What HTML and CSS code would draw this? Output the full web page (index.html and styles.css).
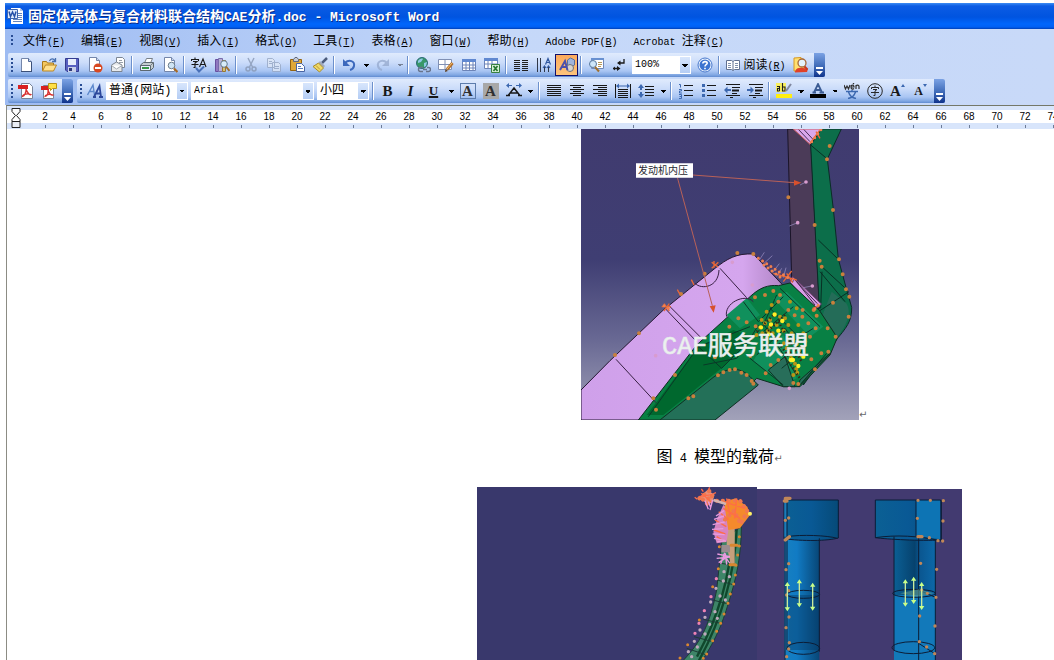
FILE: index.html
```html
<!DOCTYPE html>
<html lang="zh-CN">
<head>
<meta charset="utf-8">
<title>固定体壳体与复合材料联合结构CAE分析.doc - Microsoft Word</title>
<link rel="stylesheet" href="styles.css">
</head>
<body>
<div class="window">
  <header class="title-bar">
    <svg class="app-icon" viewBox="0 0 16 16"><path fill="#fff" d="M4 0h9l3 3v13H4z"/><path fill="#b8c8e4" d="M13 0v3h3z"/><path stroke="#6484bc" d="M10 5.500h5M11 7.500h4M11 9.500h4M6 11.500h9M6 13.500h9"/><path fill="#dfe9fa" stroke="#3c64b0" d="M.5 1.500h10v9H.5z"/><path fill="none" stroke="#2450a8" stroke-width="1.500" d="M2 3.500l1.500 5 2-4.500 2 4.500L9 3.500"/></svg>
    <h1 class="title"><span class="cjk">固定体壳体与复合材料联合结构</span>CAE<span class="cjk">分析</span>.doc - Microsoft Word</h1>
  </header>

  <div class="chrome">
    <nav class="menu-bar">
      <i class="grip"></i>
      <button class="menu"><span class="cjk">文件</span>(<u>F</u>)</button>
      <button class="menu"><span class="cjk">编辑</span>(<u>E</u>)</button>
      <button class="menu"><span class="cjk">视图</span>(<u>V</u>)</button>
      <button class="menu"><span class="cjk">插入</span>(<u>I</u>)</button>
      <button class="menu"><span class="cjk">格式</span>(<u>O</u>)</button>
      <button class="menu"><span class="cjk">工具</span>(<u>T</u>)</button>
      <button class="menu"><span class="cjk">表格</span>(<u>A</u>)</button>
      <button class="menu"><span class="cjk">窗口</span>(<u>W</u>)</button>
      <button class="menu"><span class="cjk">帮助</span>(<u>H</u>)</button>
      <button class="menu">Adobe PDF(<u>B</u>)</button>
      <button class="menu">Acrobat <span class="cjk">注释</span>(<u>C</u>)</button>
    </nav>

    <div class="bar-row">
      <div class="toolbar">
        <i class="grip"></i>
        <button class="tool" aria-label="新建"><svg viewBox="0 0 16 16"><path fill="#fff" stroke="#7486aa" d="M3.500 1.500h7l3 3v10h-10z"/><path fill="#c8d6ee" stroke="#506898" d="M10.500 1.500v3h3"/><path stroke="#3c5078" d="M13.500 5v10M3 14.500h11"/></svg></button>
        <button class="tool" aria-label="打开"><svg viewBox="0 0 16 16"><path fill="#f4c860" stroke="#a87818" d="M1.500 13.500v-9h4l1 1.500h6v3"/><path fill="#ffe08c" stroke="#b88420" d="M1.500 14l3-6h11l-3 6z"/><path fill="none" stroke="#4870b0" stroke-width="1.300" d="M8.500 4c1-2.500 4-3 5.500 0M14.500 1v3.500H11"/></svg></button>
        <button class="tool" aria-label="保存"><svg viewBox="0 0 16 16"><path fill="#5860c0" stroke="#343c90" d="M1.500 1.500h13v13H3l-1.500-1.500z"/><path fill="#e8eefc" d="M4 2h8v6H4z"/><path fill="#c8d0e8" d="M4 10h8v5H4z"/><path fill="#303878" d="M5 11h3v3H5z"/></svg></button>
        <button class="tool" aria-label="权限"><svg viewBox="0 0 16 16"><path fill="#fff" stroke="#7486aa" d="M2.500.500h7l3 3v11h-10z"/><path fill="#c8d6ee" stroke="#7486aa" d="M9.500.500v3h3"/><circle cx="11" cy="11" r="4.500" fill="#d84820"/><path fill="#fff" d="M8 10h6v2H8z"/></svg></button>
        <button class="tool" aria-label="电子邮件"><svg viewBox="0 0 16 16"><path fill="#fff" stroke="#7c8694" d="M6.500.500h6l2 2v8h-8z"/><path fill="#e8eaec" stroke="#7c8490" d="M1.500 8l5-3 5.500 3v6.500H1.500z"/><path fill="#fff" stroke="#a4acb4" d="M1.500 8.500l5 3.500L12 8.500"/><path stroke="#98a0aa" d="M9 3.500h3M9 5.500h4"/></svg></button>
        <i class="sep"></i>
        <button class="tool" aria-label="打印"><svg viewBox="0 0 16 16"><path fill="#fff" stroke="#788088" d="M5.500 6l2-4.500h6l-2 4.500z"/><path fill="#c4ccd0" stroke="#5c6870" d="M1.500 8l3-2.500h10v5l-3 3h-10z"/><path fill="#eef" stroke="#5c6870" d="M1.500 8.500h10v5h-10z"/><path stroke="#389848" stroke-width="2" d="M3 11h7"/><path stroke="#788088" d="M11.500 8.500l3-3"/></svg></button>
        <button class="tool" aria-label="打印预览"><svg viewBox="0 0 16 16"><path fill="#fff" stroke="#7486aa" d="M2.500.500h7l3 3v11h-10z"/><path fill="#c8d6ee" stroke="#7486aa" d="M9.500.500v3h3"/><circle cx="9.500" cy="8.500" r="3.300" fill="#cfe4f4" stroke="#6c7c8c"/><path stroke="#a86820" stroke-width="2.200" d="M12 11.500l3.500 3.500"/></svg></button>
        <i class="sep"></i>
        <button class="tool" aria-label="拼写和语法"><svg viewBox="0 0 16 16"><path fill="none" stroke="#181818" stroke-width="1.100" d="M4 .500v1.500M.5 4V2.500h7V4M2 4.500h4L4 6v4.500H2.500M.5 7.500h7M8.500 10L12 2l3 8M10 7.500h4"/><path fill="none" stroke="#4870b8" stroke-width="2" d="M5 11l3 3.500L13 9.500"/></svg></button>
        <button class="tool" aria-label="信息检索"><svg viewBox="0 0 16 16"><path fill="#9078c0" stroke="#6850a0" d="M1.500 2.500h3v12h-3z"/><path fill="#b8b0d4" stroke="#786cac" d="M4.500 1.500h4v13h-4z"/><path fill="#d8c078" stroke="#987830" d="M8.500 3.500h3v11h-3z"/><circle cx="10" cy="7" r="3.300" fill="#d8ecf8" stroke="#607890"/><path stroke="#a07030" stroke-width="2" d="M12 9.500l3.500 4.500"/></svg></button>
        <i class="sep"></i>
        <button class="tool" aria-label="剪切" disabled><svg viewBox="0 0 16 16"><path fill="none" stroke="#8898b4" stroke-width="1.400" d="M5 1l4.500 9M11 1L6.500 10"/><circle cx="5" cy="12" r="2" fill="none" stroke="#8898b4" stroke-width="1.500"/><circle cx="11" cy="12" r="2" fill="none" stroke="#8898b4" stroke-width="1.500"/></svg></button>
        <button class="tool" aria-label="复制" disabled><svg viewBox="0 0 16 16"><path fill="#dce6f6" stroke="#98a8c4" d="M1.500 1.500h5l2 2v7h-7zM6.500 5.500h6l2 2v7h-8z"/><path stroke="#98a8c4" d="M3 4.500h3M3 6.500h3M8 9.500h5M8 11.500h5"/></svg></button>
        <button class="tool" aria-label="粘贴"><svg viewBox="0 0 16 16"><path fill="#e0a838" stroke="#946410" d="M1.500 2.500h11v11h-11z"/><path fill="#c8ccd4" stroke="#60687c" d="M4.500 4.500v-2L6 .500h2l1.500 2v2z"/><path fill="#fff" stroke="#4864a4" d="M7.500 6.500h5l3 3v5h-8z"/><path stroke="#5c7cb8" d="M9 9.500h3M9 11.500h5"/></svg></button>
        <button class="tool" aria-label="格式刷"><svg viewBox="0 0 16 16"><path stroke="#4c5c7c" stroke-width="2.500" d="M15 1l-5 5"/><path fill="#a0a8b8" d="M8 4l5 5-1.500 1.500L6.500 6z"/><path fill="#f0d868" stroke="#a88c28" d="M6.500 6l5 5-4 4L1 9.500z"/><path stroke="#b89830" d="M4 8.500l4 4"/></svg></button>
        <i class="sep"></i>
        <button class="tool" aria-label="撤消"><svg viewBox="0 0 16 16"><path fill="none" stroke="#3c68bc" stroke-width="2" d="M4 6c4-4 10-2 9 3-.4 2-2 3.500-4 4"/><path fill="#3c68bc" d="M2 2v7h7z"/></svg></button>
        <button class="drop" aria-label="撤消列表"></button>
        <button class="tool" aria-label="恢复" disabled><svg viewBox="0 0 16 16"><path fill="none" stroke="#98acd0" stroke-width="2" d="M12 6C8 2 2 4 3 9c.4 2 2 3.500 4 4"/><path fill="#98acd0" d="M14 2v7H7z"/></svg></button>
        <button class="drop" aria-label="恢复列表" disabled></button>
        <i class="sep"></i>
        <button class="tool" aria-label="超链接"><svg viewBox="0 0 16 16"><circle cx="7" cy="6" r="5.500" fill="#389868" stroke="#2c6c78"/><path fill="#90c8e8" d="M3 4c1-2 4-3 5-2L6 5 3 6zM9 6l3-1-1 4-2 1z"/><path fill="none" stroke="#68748c" stroke-width="1.400" d="M8 10.500H5.500a2 2 0 000 4H8M12 10.500h1.500a2 2 0 010 4H11M8 12.500h4"/></svg></button>
        <button class="tool" aria-label="表格和边框"><svg viewBox="0 0 16 16"><path fill="#fff" stroke="#8090b4" d="M.5 2.500h13v10H.5zM7 2.500v10M.5 7.500h13"/><path stroke="#b06c28" stroke-width="3" d="M14.500 6L9 12.500"/><path stroke="#f4c070" d="M14 6l-5 6"/><path fill="#604020" d="M7 15l.5-3L10 14z"/></svg></button>
        <button class="tool" aria-label="插入表格"><svg viewBox="0 0 16 16"><path fill="#fff" stroke="#6c84b8" d="M1.500 2.500h13v11h-13zM5 3v11M8.500 3v11M12 3v11M2 8h12M2 11h12"/><path fill="#6088d0" d="M1 2h14v3H1z"/></svg></button>
        <button class="tool" aria-label="插入 Excel 工作表"><svg viewBox="0 0 16 16"><path fill="#fff" stroke="#6c84b8" d="M.5 1.500h13v10H.5zM4 2v10M8 2v10M1 7h13"/><path fill="#6088d0" d="M0 1h14v3H0z"/><path fill="#d8f0d8" stroke="#388040" d="M7.500 7.500h8v8h-8z"/><path stroke="#287830" stroke-width="1.700" d="M9.500 9l4 5M13.500 9l-4 5"/></svg></button>
        <i class="sep"></i>
        <button class="tool" aria-label="分栏"><svg viewBox="0 0 16 16"><path stroke="#202020" d="M1 3.500h6M1 5.500h6M1 7.500h6M1 9.500h6M1 11.500h6M1 13.500h6M9 3.500h6M9 5.500h6M9 7.500h6M9 9.500h6M9 11.500h6M9 13.500h6"/></svg></button>
        <button class="tool" aria-label="更改文字方向"><svg viewBox="0 0 16 16"><path fill="none" stroke="#303848" d="M1.500 1v14M4.500 1v14M8.500 9v6M12.500 9v6"/><path fill="none" stroke="#3058a0" stroke-width="1.200" d="M9.500 7.500l2.500-6 2.500 6M10.500 5.500h3M7 11l1.500-2 1.500 2M11 11l1.500-2 1.500 2"/></svg></button>
        <button class="tool pressed" aria-label="绘图" aria-pressed="true"><svg viewBox="0 0 16 16"><path fill="#a0b4dc" stroke="#5870a0" d="M8.500 3l3-2 4 2v5l-3 2-4-2z"/><ellipse cx="11" cy="11" rx="3.500" ry="3.500" fill="#d8d4cc" stroke="#70707c"/><path fill="none" stroke="#4c50ac" stroke-width="2" d="M1 13L6 4l2.500 9M3 10h5"/></svg></button>
        <i class="sep"></i>
        <button class="tool" aria-label="文档结构图"><svg viewBox="0 0 16 16"><path fill="#fff" stroke="#7088b8" d="M3.500 1.500h12v10h-12z"/><path fill="#6890d0" d="M3 1h13v2H3z"/><path stroke="#b89858" d="M10 5.500h4M10 7.500h4M10 9.500h3"/><circle cx="5" cy="7" r="3.500" fill="#cfe6f8" stroke="#58789c"/><path stroke="#a07030" stroke-width="2" d="M7 10l4 4.500"/></svg></button>
        <button class="tool" aria-label="显示/隐藏编辑标记"><svg viewBox="0 0 16 16"><path fill="none" stroke="#181818" stroke-width="1.300" d="M13 2v4H8M2 11.500h4"/><path fill="#181818" d="M6 6l3.500-2.500v5zM9.500 11.500L6 9v5zM4 9.500l-2 2 2 2z"/></svg></button>
        <select class="combo combo-zoom" aria-label="显示比例"><option>100%</option></select>
        <button class="tool" aria-label="帮助"><svg viewBox="0 0 16 16"><circle cx="8" cy="8" r="7" fill="#eef5ff" stroke="#4878cc"/><circle cx="8" cy="8" r="5.500" fill="#3c74d0"/><path fill="none" stroke="#fff" stroke-width="1.600" d="M5.800 6.500C6 4 10.300 4 10.200 6.300 10.100 7.800 8 7.700 8 9.500M8 10.700v1.500"/></svg></button>
        <i class="sep"></i>
        <button class="tool tool-text"><svg viewBox="0 0 16 16"><path fill="#fff" stroke="#607090" d="M1.500 3.500h5l1.500 1 1.500-1h5v9h-5l-1.500 1-1.500-1h-5zM8 4.500v9"/><path stroke="#8090ac" d="M3 6.500h3M3 8.500h3M3 10.500h3M10 6.500h3M10 8.500h3M10 10.500h3"/></svg><span><span class="cjk">阅读</span>(<u>R</u>)</span></button>
        <button class="tool" aria-label="查找资料"><svg viewBox="0 0 16 16"><path fill="#ffe070" stroke="#d89820" d="M1 1l7-.5 3 3V14H1z"/><path fill="#e04028" d="M2 14.500c1-4 5-4 8-3.500l5 1-1 3-12 .5z"/><circle cx="9" cy="6" r="4" fill="#e4f4fc" stroke="#a86838" stroke-width="1.300"/><path stroke="#c83820" stroke-width="2" d="M11.500 9.500l3 3"/></svg></button>
        <button class="cap" aria-label="工具栏选项"><svg viewBox="0 0 7 8"><path fill="#fff" d="M0 0h7v2H0zM0 4h7L3.500 8z"/></svg></button>
      </div>
    </div>

    <div class="bar-row">
      <div class="toolbar">
        <i class="grip"></i>
        <button class="tool" aria-label="转换为 Adobe PDF"><svg viewBox="0 0 16 16"><path fill="#fff" stroke="#788498" d="M3.500.500h8l3 3v12h-11z"/><path fill="#d82020" d="M0 2h10v4H0z"/><path fill="none" stroke="#d83030" stroke-width="1.300" d="M8 6c.5 4-2 7-3.500 7.500C4 12 8 10 13 11.500 12 13 9 9 8 6"/></svg></button>
        <button class="tool" aria-label="转换并添加注释"><svg viewBox="0 0 16 16"><path fill="#fff" stroke="#788498" d="M2.500 2.500h10v13h-10z"/><path fill="#d82020" d="M0 3h8v4H0z"/><path fill="none" stroke="#d83030" stroke-width="1.300" d="M7 7c.5 4-1.500 6-3 6.500C4 12 8 10.500 12 12 10 13 8 10 7 7"/><path fill="#ffe048" stroke="#b89418" d="M7.500.500h8v5h-4l-2 2v-2h-2z"/></svg></button>
        <button class="cap" aria-label="工具栏选项"><svg viewBox="0 0 7 8"><path fill="#fff" d="M0 0h7v2H0zM0 4h7L3.500 8z"/></svg></button>
      </div>
      <div class="toolbar">
        <i class="grip"></i>
        <button class="tool" aria-label="格式窗格"><svg viewBox="0 0 16 16"><path fill="none" stroke="#5c88cc" stroke-width="1.400" d="M.5 12L6 2l1.500 10M3 8.500h4"/><path fill="none" stroke="#2c489c" stroke-width="1.800" d="M7 14l5.500-11L14 14M9 10.500h5M6 14h3M12 14h4"/></svg></button>
        <select class="combo combo-style" aria-label="样式"><option>普通(网站)</option></select>
        <select class="combo combo-font" aria-label="字体"><option>Arial</option></select>
        <select class="combo combo-size" aria-label="字号"><option>小四</option></select>
        <i class="sep"></i>
        <button class="tool glyph" aria-label="加粗">B</button>
        <button class="tool glyph italic" aria-label="倾斜">I</button>
        <button class="tool glyph under" aria-label="下划线">U</button>
        <button class="drop" aria-label="下划线样式"></button>
        <button class="tool glyph" aria-label="字符边框"><span class="boxed">A</span></button>
        <button class="tool glyph" aria-label="字符底纹"><span class="shaded">A</span></button>
        <button class="tool" aria-label="字符缩放"><svg viewBox="0 0 16 16"><path fill="none" stroke="#181818" stroke-width="1.500" d="M2.500 12L8 5l5.500 7M4.500 10h7M0 12.500h4M12 12.500h4"/><path fill="#3c68b0" d="M0 2.500L3 0v2h3v1H3v2zM16 2.500L13 0v2h-3v1h3v2z"/></svg></button>
        <button class="drop" aria-label="缩放比例"></button>
        <i class="sep"></i>
        <button class="tool" aria-label="两端对齐"><svg viewBox="0 0 16 16"><path stroke="#181818" d="M1 2.500h14M1 4.500h14M1 6.500h14M1 8.500h14M1 10.500h14M1 12.500h14"/></svg></button>
        <button class="tool" aria-label="居中"><svg viewBox="0 0 16 16"><path stroke="#181818" d="M1 2.500h14M4 4.500h8M1 6.500h14M4 8.500h8M1 10.500h14M4 12.500h8"/></svg></button>
        <button class="tool" aria-label="右对齐"><svg viewBox="0 0 16 16"><path stroke="#181818" d="M1 2.500h14M6 4.500h9M1 6.500h14M6 8.500h9M1 10.500h14M6 12.500h9"/></svg></button>
        <button class="tool" aria-label="分散对齐"><svg viewBox="0 0 16 16"><path stroke="#181818" d="M.5 1v14M15.500 1v14M3 6.500h10M3 8.500h10M3 10.500h10M3 12.500h10M3 14.500h10"/><path fill="#3c68b0" d="M1 3l3-2.500V2.500h8V.500L15 3l-3 2.500v-2H4v2z"/></svg></button>
        <button class="tool" aria-label="行距"><svg viewBox="0 0 16 16"><path stroke="#181818" stroke-width="1.200" d="M7 3.500h9M7 6.500h9M7 9.500h9M7 12.500h9"/><path fill="#3c68b0" d="M0 5l3-4 3 4H4v2H2V5zM0 11l3 4 3-4H4V9H2v2z"/></svg></button>
        <button class="drop" aria-label="行距列表"></button>
        <i class="sep"></i>
        <button class="tool" aria-label="编号"><svg viewBox="0 0 16 16"><path stroke="#181818" d="M6 2.500h9M6 7.500h9M6 12.500h9"/><path fill="none" stroke="#3c68b0" d="M1 1.500h1.500v3M1 6.500h2.500v1.500H1.500v2H4M1 11.500h2.500v4H1M1.500 13.500h2"/></svg></button>
        <button class="tool" aria-label="项目符号"><svg viewBox="0 0 16 16"><path stroke="#181818" d="M6 2.500h9M6 7.500h9M6 12.500h9"/><path fill="#3c68b0" d="M1 1h3v3H1zM1 6h3v3H1zM1 11h3v3H1z"/></svg></button>
        <button class="tool" aria-label="减少缩进量"><svg viewBox="0 0 16 16"><path stroke="#181818" d="M2 1.500h14M8 4.500h8M8 10.500h5M2 12.500h14M6 14.500h3"/><path stroke="#181818" stroke-width="2" d="M8 7.500h7"/><path fill="#3c68b0" d="M0 7l3.500-3.500v2.500H7v2H3.500v2.500z"/></svg></button>
        <button class="tool" aria-label="增加缩进量"><svg viewBox="0 0 16 16"><path stroke="#181818" d="M2 1.500h14M8 4.500h8M8 10.500h5M2 12.500h14M6 14.500h3"/><path stroke="#181818" stroke-width="2" d="M8 7.500h7"/><path fill="#3c68b0" d="M7 7L3.500 3.500v2.500H0v2h3.500v2.500z"/></svg></button>
        <i class="sep"></i>
        <button class="tool" aria-label="突出显示"><svg viewBox="0 0 16 16"><path fill="#f8f060" d="M0 0h10v9H0z"/><path fill="none" stroke="#202020" stroke-width="1.100" d="M1 3.500h2.500V8M3.500 5.500H1.500V8h2M6.500 0v8h2.500V4H6.500"/><path stroke="#8088a0" stroke-width="2" d="M15 1l-5 7"/><path fill="#ffee10" d="M0 11h16v4H0z"/></svg></button>
        <button class="drop" aria-label="突出显示颜色"></button>
        <button class="tool" aria-label="字体颜色"><svg viewBox="0 0 16 16"><path fill="none" stroke="#3c5c94" stroke-width="1.800" d="M4 9.500L8 1l4 8.500M5.500 7h5M2.500 9.500h3.500M9.500 9.500h4.500"/><path fill="#000" d="M0 11h16v4H0z"/></svg></button>
        <button class="drop" aria-label="字体颜色列表"></button>
        <button class="tool" aria-label="拼音指南"><svg viewBox="0 0 16 16"><path fill="none" stroke="#303030" stroke-width="1.200" d="M0 2l1.500 4L3 3l1.500 3L6 2M7 4h3c0-2.500-3-2.500-3 0 0 2.500 2 2.500 3 1.500M9 1l1-1M12 6V2M12 3c1-1.500 3-1 3 .5V6"/><path fill="none" stroke="#3c68b0" stroke-width="1.400" d="M2 8.500h12M8 7v2M4.500 9c1 3 4 6 7.500 6.500M11.500 9c-1 3-4 6-7.500 6.500"/></svg></button>
        <button class="tool" aria-label="带圈字符"><svg viewBox="0 0 16 16"><circle cx="8" cy="8" r="7.300" fill="none" stroke="#282828"/><path fill="none" stroke="#282828" d="M8 2.500v1.500M4.500 6V4.500h7V6M6 6.500h4L8 8v4.500H6.500M4 9.500h8"/></svg></button>
        <button class="tool glyph" aria-label="增大字号">A<svg class="mark" viewBox="0 0 4 16"><path fill="#3c68b0" d="M0 4l2-3 2 3z"/></svg></button>
        <button class="tool glyph small" aria-label="减小字号">A<svg class="mark" viewBox="0 0 4 16"><path fill="#3c68b0" d="M0 1h4L2 4z"/></svg></button>
        <button class="cap" aria-label="工具栏选项"><svg viewBox="0 0 7 8"><path fill="#fff" d="M0 0h7v2H0zM0 4h7L3.500 8z"/></svg></button>
      </div>
    </div>
  </div>

  <main class="editor">
    <div class="ruler">
      <svg class="indent" viewBox="0 0 10 20"><path fill="#fff" stroke="#202020" d="M1 .500h8v3l-3.500 4 3.500 4v2H1v-2l3.500-4L1 3.500z"/><path fill="#e8ecf4" stroke="#202020" d="M1 13.500h8v6H1z"/></svg>
      <div class="marks"><span>2</span><span>4</span><span>6</span><span>8</span><span>10</span><span>12</span><span>14</span><span>16</span><span>18</span><span>20</span><span>22</span><span>24</span><span>26</span><span>28</span><span>30</span><span>32</span><span>34</span><span>36</span><span>38</span><span>40</span><span>42</span><span>44</span><span>46</span><span>48</span><span>50</span><span>52</span><span>54</span><span>56</span><span>58</span><span>60</span><span>62</span><span>64</span><span>66</span><span>68</span><span>70</span><span>72</span><span>74</span></div>
    </div>

    <article class="sheet">
      <figure class="figure">
        <div class="figure-line">
          <svg class="load-model" viewBox="33 12 834 873" role="img" aria-label="模型载荷图">
            <defs>
              <linearGradient id="sky" x2="0" y2="1"><stop offset="0" stop-color="#403b6f"/><stop offset=".45" stop-color="#3f3e73"/><stop offset=".72" stop-color="#686893"/><stop offset="1" stop-color="#a2a2b9"/></linearGradient>
              <linearGradient id="pink" x2="1" y2="0"><stop offset="0" stop-color="#cfa0ea"/><stop offset=".8" stop-color="#d5a6ee"/><stop offset="1" stop-color="#b084c4"/></linearGradient>
            </defs>
            <path fill="url(#sky)" d="M33 12h834v873H33z"/>
            <path fill="#4b3b58" stroke="#1a1428" stroke-width="3" d="M653 12h20l50 48 26 495-84-95z"/>
            <path fill="#daa8ec" stroke="#d06060" stroke-width="3" d="M670 12h84l-34 46z"/>
            <path stroke="#4b3058" stroke-width="3" d="M686 14l34 36M702 14l26 28"/>
            <path fill="#0c6e4a" stroke="#0a2c26" stroke-width="3" d="M722 60l32-48h60l-42 90 18 150 15 150 23 85 17 60c0 30-5 50-40 90L700 780l-30-180 78-50z"/>
            <path fill="#246c58" d="M785 500l43 35c16 20 10 60-30 105l-50-45z"/>
            <path fill="none" stroke="#083024" stroke-width="3" d="M722 60l50 42M745 345l62 60M750 420l82 75M750 440l75 90M745 560l92-60M756 440l-4 110M730 590l70 45M710 620l65 65"/>
            <path fill="url(#pink)" stroke="#241832" stroke-width="3" d="M33 795l87-88 160-152 155-125c35-28 65-46 115-43l90 95-80 60-350 343H33z"/>
            <path fill="#d89ce6" stroke="#704070" stroke-width="3" d="M668 455l86 82-20 20-74-86z"/>
            <path stroke="#402848" stroke-width="3" d="M680 470l55 70M672 462l70 74"/>
            <path fill="#088044" stroke="#102c20" stroke-width="3" d="M205 885l175-225 160-145c30-28 55-36 85-33l35-8 88 82 54 82-22 52-90 95h-50l-80-25-125 125z"/>
            <path fill="#00682e" d="M230 870l155-205 105-50 55 20-85 90-180 145z"/>
            <path fill="#237058" stroke="#103024" stroke-width="3" d="M270 885l150-120c50-42 90-40 120-10l25 25-130 105z"/>
            <path fill="#10905c" d="M470 570l60-50 40 50-60 40zM610 520l40-20 110 105-40 30zM560 690l80-60 40 130-40 18-90-70z"/>
            <path fill="#286e5a" stroke="#103024" stroke-width="3" d="M595 735l50-40 30 90h-35zM690 765l90-80-95 100z"/>
            <path fill="none" stroke="#0a3828" stroke-width="3" d="M235 875l150-210 155-60M385 665l70 65 80-80 30-50M400 720l100-20 80-100 40-90M570 580l110 170M520 530l45 60 75-75M630 490l120 115M540 700l100 80M560 690l85-80 50 70-60 50M600 550l100 100M580 620l90-75M690 780l80-95M650 660l80-50"/>
            <g fill="none" stroke="#382044" stroke-width="3"><path d="M138 703l120 130M285 550l95 100M300 545l95 95M450 430l80 88M375 475c20 20 70 12 72-40M470 575c-10-40 55-72 80-45"/></g>
            <path fill="none" stroke="#60345c" stroke-width="7" stroke-dasharray="3 5" d="M550 385l110 78M575 405l95 65"/>
            <path stroke="#a094c8" stroke-width="2" d="M568 405l15-23M582 415l25-23M608 442l20-26M620 455l15-25M640 458l8-30M658 303l25-10M690 180l18-9M700 488l25-5"/>
            <g fill="none" stroke="#c9803c" stroke-width="12" stroke-linecap="round"><path d="M502 384h0M550 387h0M135 690h0M207 625h0M333 507h0M404 446h0M655 217h0M734 300h0M779 63h0M771 103h0M789 255h0M749 407h0M807 403h0M818 448h0M828 493h0M838 515h0M836 575h0M789 533h0M797 635h0M775 680h0M773 610h0M755 425h0M435 697h0M478 605h0M505 580h0M530 592h0M557 604h0M555 517h0M585 510h0M610 498h0M630 510h0M655 555h0M674 571h0M697 575h0M715 595h0M737 610h0M720 635h0M706 650h0M690 690h0M724 703h0M735 733h0M754 685h0M625 705h0M602 720h0M587 745h0M541 693h0M545 768h0M530 750h0M514 743h0M495 733h0M479 735h0M460 742h0M444 751h0M370 814h0M355 820h0M258 854h0M250 820h0M315 750h0M550 776h0M670 774h0M685 777h0M698 555h0M731 555h0M740 572h0M625 530h0"/></g>
            <g fill="none" stroke="#b99418" stroke-width="12" stroke-linecap="round"><path d="M570 608h0M585 595h0M600 585h0M613 570h0M630 575h0M637 588h0M594 618h0M608 625h0M625 640h0M642 655h0M655 683h0M663 698h0M675 716h0M679 732h0M670 750h0M600 606h0M577 625h0M620 600h0M650 670h0M687 675h0M680 658h0M641 617h0M560 630h0M682 743h0M590 560h0M605 540h0M645 580h0M655 600h0M665 625h0M670 645h0M695 665h0M700 625h0M685 600h0M660 530h0M680 550h0M575 585h0M590 640h0"/></g>
            <path fill="none" stroke="#352813" stroke-width="7" stroke-dasharray="4 7" d="M560 620l60-60M570 640l80-75M600 620l60 80M625 590l70 120M655 710l35 50M645 700l35-40"/>
            <g fill="none" stroke="#fff028" stroke-width="13" stroke-linecap="round"><path d="M573 607h0M603 598h0M614 568h0M637 588h0M597 628h0M662 705h7M685 723h0M700 695h0M625 617h0"/></g>
            <path fill="none" stroke="#e86838" stroke-width="4" d="M275 545h28M282 536l16 22M298 536l-16 22M425 412l20 15M425 430l20-18M432 408v20M610 445l70 20M640 470l25-32M650 445l18 28M372 480l-8-16M330 508l-8-14M720 55l28-38M738 20l12 20M728 550l20-8"/>
            <path fill="none" stroke="#f08050" stroke-width="9" stroke-linecap="round" stroke-dasharray="0 15" d="M565 400l95 62M725 50l28-36M735 552l18-22M582 420l60 45M282 542l14 8"/>
            <path fill="none" stroke="#b96158" stroke-width="3" d="M368 150l305 23M322 157l105 385"/>
            <path fill="#d8502c" d="M672 165l22 8-22 9zM419 544l18-3-6 22z"/>
            <g fill="none" stroke="#d89ccf" stroke-width="11" stroke-linecap="round"><path d="M708 171h0M683 293h0M727 483h0M487 412h0M547 480h0M257 692h0M658 790h0"/></g>
            <path fill="#fff" d="M198 115h171v43H198z"/>
            <text class="callout" x="204" y="148">发动机内压</text>
            <text class="watermark" x="276" y="686"><tspan class="latin">CAE</tspan>服务联盟</text>
          </svg><span class="return">↵</span>
        </div>
        <figcaption class="caption">图<span class="number"> 4 </span>模型的载荷<span class="return">↵</span></figcaption>
      </figure>

      <div class="figure-pair">
        <svg class="nozzle-model" viewBox="-489 171 840 600" role="img" aria-label="喷管模型">
          <path fill="#39386c" d="M-489 171h840v600h-840z"/>
          <path fill="#3e8568" stroke="#1c3c34" stroke-width="3" d="M246 330l58-40c0 90-16 160-42 240-20 65-40 110-100 200H95l45-50c45-50 70-100 90-200z"/>
          <path fill="none" stroke="#10482c" stroke-width="7" d="M290 300c-6 120-35 250-115 395M276 320c-5 100-30 220-105 360"/>
          <path fill="none" stroke="#1c3c34" stroke-width="3" d="M240 400l50 6M232 450l50 15M218 510l48 12M190 568l52 12M162 620l52 14M140 655l60 20"/>
          <path fill="#c8a07c" d="M262 290h22v110l-12 5-12-60z"/><path fill="#9a8c90" d="M244 345h26v22h-26z"/>
          <path fill="#d884c0" d="M250 225l24 20-14 90-30 5-10-35 12-40z"/>
          <path fill="#f58a2c" d="M252 215l35-10 35 25 8 25-30 40-35 5-5-30z"/>
          <path fill="#e8907c" d="M180 200l22-20 22 14-8 24-14 6z"/>
          <path fill="none" stroke="#f07850" stroke-width="12" stroke-linecap="round" stroke-dasharray="1 17" d="M178 205l30-22 10 20-30 5 20 20M230 212l70 0 22 30-20 40-20-40-30 30"/>
          <path fill="none" stroke="#ff6c48" stroke-width="4" d="M172 208l-8-6M190 185l-6-8M205 180l4-8M218 192l10-4M184 190l30 26M176 200l40-6M250 215l65 20M250 235l50 30M260 205l10 50M290 205l-6 60M225 270l34 20M222 300l34 12M230 320l26 16M236 245l30 24"/>
          <path fill="none" stroke="#e89ade" stroke-width="4" d="M195 212l10 26M205 215l8 20M218 210l-8 30M222 268l30-10M218 284l36-8M216 298l34-2M218 312l36 2M222 325l32 6M232 335l26-2M228 258l24-16M232 372l38 8M230 385l40-4M236 398l30-20M242 402l12-34M260 404l-4-34M270 400l-20-26"/>
          <path stroke="#d4b4b0" stroke-width="8" d="M220 210l38 12"/>
          <g fill="none" stroke="#d8872f" stroke-width="9" stroke-linecap="round"><path d="M298 320h0M298 348h0M288 406h0M281 462h0M264 520h0M242 580h0M218 632h0M200 672h0M293 375h0M286 435h0M271 492h0M252 552h0M230 604h0M190 685h0M238 350h0M235 416h0M218 470h0M178 570h0M143 644h0M120 684h0M273 346h18M270 404h16"/></g>
          <g fill="none" stroke="#bfa9bd" stroke-width="10" stroke-linecap="round"><path d="M252 425h0M250 453h0M228 475h0M240 498h0M212 516h0M225 545h0M195 562h0M209 583h0M180 600h0M195 612h0M163 634h0M172 651h0M145 665h0M155 680h0M268 440h0M256 510h0M232 565h0"/></g>
          <g fill="none" stroke="#ef83b5" stroke-width="10" stroke-linecap="round"><path d="M229 446h0M213 500h0M193 542h0M177 580h0M165 610h0"/></g>
          <circle cx="330" cy="251" r="6" fill="#ffef66"/>
        </svg>
        <svg class="bolt-model" viewBox="351 177 615 594" role="img" aria-label="螺栓模型">
          <defs>
            <linearGradient id="bolt"><stop offset="0" stop-color="#1780c0"/><stop offset=".35" stop-color="#117bc4"/><stop offset="1" stop-color="#084676"/></linearGradient>
            <linearGradient id="head"><stop offset="0" stop-color="#0b6094"/><stop offset=".5" stop-color="#095995"/><stop offset="1" stop-color="#064a78"/></linearGradient>
            <linearGradient id="shaft"><stop offset="0" stop-color="#0b5f94"/><stop offset=".5" stop-color="#06426e"/><stop offset=".62" stop-color="#0a5690"/><stop offset="1" stop-color="#0c68a8"/></linearGradient>
          </defs>
          <path fill="#423a70" d="M351 177h615v594H351z"/>
          <path fill="url(#bolt)" d="M434 320h104v450H434z"/>
          <path fill="#063c68" opacity=".45" d="M445 495h93v165h-93z"/>
          <path fill="url(#head)" stroke="#0b1c38" stroke-width="3" d="M432 210h163v114c-30 9-110 10-163 2z"/>
          <path fill="#1c7cba" d="M433 211h8v450h-8z"/>
          <path fill="url(#shaft)" d="M762 325h124v450H762z"/>
          <path fill="#1279ba" d="M762 495h124v280H762z"/>
          <path fill="url(#head)" stroke="#0b1c38" stroke-width="3" d="M706 210h196v120c-60 3-160-2-196-7z"/>
          <path fill="#0d74b4" d="M828 212h73v116l-73-10z"/>
          <g fill="none" stroke="#0c1d36" stroke-width="3"><path d="M441 210v450M435 320v370M828 210v110M904 210v120M836 320v370M886 330v360M762 320v340M538 325v340M442 320c40-7 120-4 150 5M706 323c60-9 130-6 198 10"/><ellipse cx="490" cy="493" rx="49" ry="12"/><ellipse cx="490" cy="655" rx="49" ry="18"/><ellipse cx="822" cy="490" rx="64" ry="12"/><ellipse cx="820" cy="653" rx="64" ry="18"/><path d="M836 640l50 32M836 480l50 22"/></g>
          <path fill="#609d8e" opacity=".6" d="M780 490l56-12 45 12-50 10z"/>
          <g fill="none" stroke="#c18758" stroke-width="10" stroke-linecap="round"><path d="M436 205h14M433 213h8M436 271h0M446 264h0M436 330l12-10M446 401h0M438 419h0M446 482h0M440 495h0M447 561h0M438 593h0M448 638h0M446 657h0M440 680h0M834 211h0M871 211h0M910 212h0M832 265h0M909 273h0M834 320h12M868 323h0M894 332h0M908 333h0M842 400h0M890 418h0M845 480h0M862 490h0M888 502h0M839 558h0M885 588h0M838 635h0M860 651h0M884 671h0"/></g>
          <path stroke="#c9e99c" stroke-width="4" d="M442 465v70M478 455v72M518 465v70M796 455v70M821 447v68M845 463v70"/>
          <path fill="#c8ff88" d="M434 468l8-12 8 12zM470 460l8-12 8 12zM510 470l8-12 8 12zM788 460l8-12 8 12zM813 452l8-12 8 12zM837 468l8-12 8 12zM434 532h16l-8 12zM470 520h16l-8 12zM510 530h16l-8 12zM788 518h16l-8 12zM813 510h16l-8 12zM837 528h16l-8 12z"/>
        </svg>
      </div>
    </article>
  </main>
</div>
</body>
</html>
```

FILE: styles.css
```css
* {
  box-sizing: border-box;
}

body {
  margin: 0;
  background: #fff;
  color: #000;
  font: 10px/16px "Liberation Mono", "Noto Sans CJK SC", monospace;
}

button,
select {
  margin: 0;
  padding: 0;
  border: 0;
  border-radius: 0;
  background: none;
  color: inherit;
  font: inherit;
}

.window {
  display: flex;
  flex-direction: column;
  height: 100vh;
  padding: 3px 0 0 5px;
  overflow: hidden;
}

.cjk {
  font-family: "Noto Sans CJK SC", sans-serif;
  font-size: 12px;
}

/* Title bar */
.title-bar {
  display: flex;
  flex: none;
  align-items: center;
  gap: 5px;
  height: 26px;
  padding-left: 2px;
  background: linear-gradient(#3c8cf4 0, #0c5ce4 3px, #0054e0 14px, #0066fc 21px, #0060f4 24px, #0040b8);
}

.app-icon {
  width: 16px;
  height: 16px;
}

.title {
  margin: 0;
  color: #fff;
  font-size: 13px;
  line-height: 20px;
  font-weight: bold;
  white-space: pre;
  text-shadow: 1px 1px 0 #0a2c88;
}

.title .cjk {
  font-size: 14px;
}

/* Menu and toolbars */
.chrome {
  display: flex;
  flex: none;
  flex-direction: column;
  gap: 2px;
  padding: 0 0 2px 3px;
  background: linear-gradient(90deg, #9dbbf2, #c5d8f9 500px, #c8d9f8);
}

.menu-bar {
  display: flex;
  align-items: baseline;
  gap: 16px;
  height: 22px;
  padding-top: 1px;
}

.menu {
  line-height: 20px;
  white-space: pre;
}

.grip {
  flex: none;
  width: 6px;
  height: 14px;
  background: repeating-linear-gradient(#284c94 0 2px, transparent 2px 4px) 3px 0 / 2px 100% no-repeat;
}

.menu-bar .grip {
  height: 10px;
  margin-right: -7px;
}

.bar-row {
  display: flex;
  gap: 4px;
}

.toolbar {
  display: flex;
  align-items: center;
  height: 24px;
  border-radius: 2px;
  background: linear-gradient(#e0ebfd, #cbdcfa 40%, #a9c5f3 75%, #7fa6e2 92%, #5f8ad0);
}

.tool {
  display: flex;
  flex: none;
  align-items: center;
  justify-content: center;
  width: 23px;
  height: 22px;
}

.tool svg {
  flex: none;
  width: 16px;
  height: 16px;
}

.tool:disabled {
  opacity: .8;
}

.pressed {
  border: 1px solid #10106c;
  background: linear-gradient(#fcaa5c, #fdc47c);
}

.tool-text {
  gap: 2px;
  width: 67px;
}

.sep {
  flex: none;
  width: 6px;
  height: 18px;
  background: linear-gradient(90deg, #6c90cc 50%, #fff 50%) 2px 0 / 2px 100% no-repeat;
}

.drop {
  flex: none;
  width: 11px;
  height: 22px;
  background: conic-gradient(from -45deg at 50% 100%, #000 90deg, transparent 0) center / 6px 3px no-repeat;
}

.drop:disabled {
  opacity: .4;
}

.cap {
  display: flex;
  flex: none;
  align-items: flex-end;
  justify-content: center;
  align-self: stretch;
  width: 11px;
  margin-left: 2px;
  padding-bottom: 2px;
  border-radius: 0 2px 2px 0;
  background: linear-gradient(#7ba2e4, #4470bc 50%, #10348c);
}

.cap svg {
  width: 7px;
  height: 8px;
}

.combo {
  flex: none;
  height: 18px;
  margin-right: 3px;
  padding: 0 12px 0 3px;
  appearance: none;
  background:
    conic-gradient(from -45deg at 50% 100%, #000 90deg, transparent 0) right 3px center / 6px 3px no-repeat,
    linear-gradient(#d8e6fc, #b4cdf4) right 1px center / 10px 16px no-repeat,
    #fff;
  line-height: 16px;
}

.combo-zoom {
  width: 59px;
  margin: 0 2px;
}

.combo-style {
  width: 82px;
  font-size: 12px;
}

.combo-font {
  width: 123px;
}

.combo-size {
  width: 52px;
  margin-right: 1px;
  font-size: 12px;
}

.glyph {
  color: #181818;
  font: bold 15px/16px "Liberation Serif", serif;
}

.italic {
  font-style: italic;
}

.under {
  font-size: 13px;
  text-decoration: underline;
  text-decoration-thickness: 2px;
}

.boxed,
.shaded {
  width: 16px;
  border: 1px solid #5c7cac;
  color: #303030;
  line-height: 14px;
}

.shaded {
  border-color: #a8a8a8;
  background: #a8a8a8;
}

.small {
  font-size: 12px;
}

.tool .mark {
  width: 4px;
}

/* Ruler and document */
.editor {
  flex: 1;
  min-height: 0;
  margin-left: 1px;
  overflow: hidden;
  border-top: 1px solid #747868;
  border-left: 1px solid #8c8c84;
}

.ruler {
  display: flex;
  height: 23px;
  padding-left: 4px;
  background: linear-gradient(#d8e5fb 4px, #fff 4px 17px, #d8e5fb 17px);
}

.indent {
  flex: none;
  width: 10px;
  height: 20px;
  margin-top: 2px;
}

.marks {
  display: flex;
  margin-left: 10px;
  font: 10px/12px "Liberation Sans", sans-serif;
}

.marks span {
  flex: none;
  width: 28px;
  padding-top: 5px;
  background: linear-gradient(#6c7c98, #6c7c98) 14px 19px / 1px 3px no-repeat;
  text-align: center;
}

.sheet {
  display: flex;
  flex-direction: column;
  align-items: center;
  width: 1407px;
  margin-left: 9px;
}

.figure {
  display: flex;
  flex-direction: column;
  align-items: center;
  margin: 0;
}

.figure-line {
  display: flex;
  align-items: flex-end;
  padding-left: 9px;
}

.load-model {
  width: 278px;
  height: 291px;
}

.return {
  width: 8px;
  color: #686868;
  font: 10px/10px "DejaVu Sans", sans-serif;
}

.callout {
  fill: #282830;
  font: 30px "Noto Sans CJK SC", sans-serif;
}

.watermark {
  fill: #eef2f0;
  stroke: #e4eaea;
  stroke-width: 2px;
  font: 76px "Noto Sans CJK SC", sans-serif;
}

.latin {
  font: 76px "Liberation Mono", monospace;
}

.caption {
  margin: 23px 0 20px;
  font: 16px/24px "Noto Sans CJK SC", sans-serif;
  white-space: pre;
}

.number {
  font: 12px/16px "Liberation Mono", monospace;
}

.figure-pair {
  display: flex;
  align-items: flex-end;
}

.nozzle-model {
  width: 280px;
  height: 200px;
}

.bolt-model {
  width: 205px;
  height: 198px;
}
```
